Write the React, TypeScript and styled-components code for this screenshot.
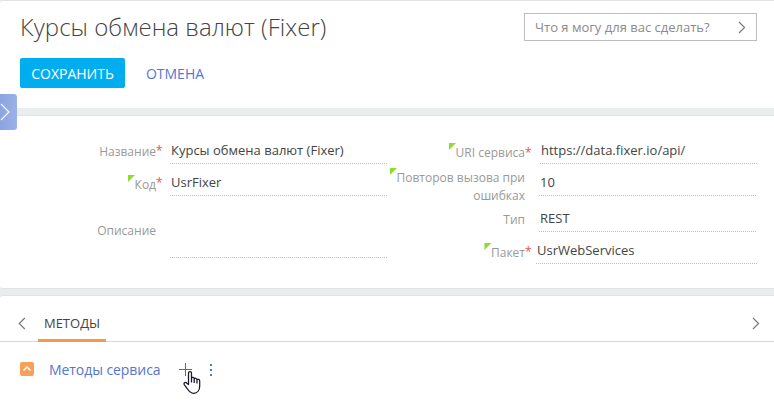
import React from "react";
import styled, { createGlobalStyle } from "styled-components";

const Global = createGlobalStyle`
  * { box-sizing: border-box; }
  html, body { margin: 0; padding: 0; background: #fff; }
  body { font-family: "Open Sans", "Noto Sans", sans-serif; font-size: 13px; color: #444; overflow: hidden; }
  svg { display: block; flex: none; }
`;

const Page = styled.div`
  position: relative;
  width: 774px;
  height: 405px;
  display: flex;
  flex-direction: column;
  background: #e9eded;
  overflow: hidden;
`;

const Header = styled.header`
  height: 108px;
  border-top: 1px solid #e2e4e4;
  border-top-left-radius: 3px;
  background: #fff;
  padding: 12px 17px 0 20px;
`;

const HeaderTop = styled.div`
  display: flex;
  justify-content: space-between;
  align-items: flex-start;
  height: 45px;
`;

const Title = styled.h1`
  margin: -3px 0 0;
  font-size: 24px;
  letter-spacing: 0.04px;
  line-height: 34px;
  font-weight: 300;
  color: #444;
  white-space: nowrap;
`;

const CommandBox = styled.div`
  width: 233px;
  height: 28px;
  border: 1px solid #bdbdbd;
  display: flex;
  align-items: center;
  justify-content: space-between;
  padding: 0 10px 0 10px;
  color: #8b8b8b;
  font-size: 13px;
  white-space: nowrap;
`;

const Actions = styled.div`
  display: flex;
  gap: 10px;
`;

const Button = styled.button<{ $primary?: boolean }>`
  height: 30px;
  width: ${(p) => (p.$primary ? 105 : 80)}px;
  padding: 1px 0 0;
  border: 0;
  border-radius: 2px;
  background: ${(p) => (p.$primary ? "#00aeef" : "transparent")};
  color: ${(p) => (p.$primary ? "#fff" : "#5576cf")};
  font: 14px "Open Sans", sans-serif;
  white-space: nowrap;
`;

const Fields = styled.section`
  height: 174px;
  margin-top: 7px;
  border: solid #e2e4e4;
  border-width: 1px 0;
  border-radius: 3px 0 0 3px;
  background: #fff;
  display: grid;
  grid-template-columns: 388px 369px;
  padding-top: 16px;
`;

const Column = styled.div`
  display: flex;
  flex-direction: column;
`;

const Row = styled.div<{ $height: number; $labelWidth: number }>`
  display: grid;
  grid-template-columns: ${(p) => p.$labelWidth}px 1fr;
  grid-template-rows: 100%;
  height: ${(p) => p.$height}px;
`;

const Label = styled.div<{ $top: number; $end: number }>`
  display: flex;
  justify-content: flex-end;
  align-items: flex-start;
  padding-top: ${(p) => p.$top}px;
  padding-right: ${(p) => p.$end}px;
  font-size: 12px;
  line-height: 18px;
  color: #999;
  text-align: right;
  white-space: pre;
`;

const LabelText = styled.span`
  position: relative;
`;

const Corner = styled.span`
  position: absolute;
  left: -6.6px;
  top: -1px;
  width: 7px;
  height: 7px;
  background: #8edc2c;
  clip-path: polygon(0 0, 100% 0, 0 100%);
`;

const Star = styled.span<{ $up: number }>`
  position: absolute;
  left: 100%;
  top: ${(p) => -p.$up}px;
  color: #f4523b;
`;

const Value = styled.div<{ $indent: number }>`
  display: flex;
  align-items: flex-end;
  height: 100%;
  padding: 0 0 5px ${(p) => p.$indent}px;
  line-height: 18px;
  background: repeating-linear-gradient(90deg, #bdbdbd 0 1px, transparent 1px 2px) bottom / 100% 1px no-repeat;
  white-space: nowrap;
`;

const Details = styled.section`
  flex: 1;
  margin-top: 6px;
  border-top: 1px solid #e2e4e4;
  border-top-left-radius: 3px;
  background: #fff;
`;

const TabBar = styled.div`
  display: flex;
  align-items: stretch;
  height: 46px;
  border-bottom: 1px solid #d8d8d8;
  padding: 0 14px 0 18px;
`;

const TabArrow = styled.div<{ $width: number }>`
  width: ${(p) => p.$width}px;
  display: flex;
  align-items: center;
  padding-top: 9px;
`;

const Tab = styled.div`
  width: 68px;
  height: 46px;
  margin-right: auto;
  border-bottom: 3px solid #f79747;
  padding-top: 18px;
  line-height: 18px;
  text-align: center;
  font-size: 13px;
`;

const DetailHeader = styled.div`
  display: flex;
  align-items: flex-start;
  padding: 18px 0 0 20px;
`;

const Collapse = styled.div`
  width: 14px;
  height: 14px;
  margin-top: 2px;
  border-radius: 2px;
  background: #f7a057;
`;

const DetailTitle = styled.div`
  width: 130px;
  margin-left: 15px;
  font-size: 14px;
  letter-spacing: -0.07px;
  line-height: 20px;
  color: #5576cf;
  white-space: nowrap;
`;

const AddButton = styled.div`
  position: relative;
  width: 13px;
  height: 13px;
  margin-top: 3px;
`;

const Cursor = styled.svg`
  position: absolute;
  left: 4px;
  top: 7px;
`;

const Dots = styled.svg`
  margin: 4px 0 0 18px;
`;

const SideHandle = styled.div`
  position: absolute;
  left: 0;
  top: 94px;
  width: 17px;
  height: 36px;
  border-radius: 0 3px 3px 0;
  background: linear-gradient(90deg, #8ba4e0, #9bb1e9);
`;

function Chevron({ left = false }: { left?: boolean }) {
  return (
    <svg width="8" height="13" viewBox="0 0 8 13" fill="none" stroke="#777" strokeWidth="1.15">
      <path d={left ? "M6.8 1 1.2 6.5l5.6 5.5" : "M1 1l5.6 5.5L1 12"} />
    </svg>
  );
}

interface FieldProps {
  label: string;
  value?: string;
  height: number;
  labelWidth: number;
  top: number;
  end?: number;
  indent?: number;
  corner?: boolean;
  starUp?: number;
}

function Field({ label, value, height, labelWidth, top, end = 14, indent = 1, corner, starUp }: FieldProps) {
  return (
    <Row $height={height} $labelWidth={labelWidth}>
      <Label $top={top} $end={end}>
        <LabelText>
          {corner && <Corner />}
          {label}
          {starUp !== undefined && <Star $up={starUp}>*</Star>}
        </LabelText>
      </Label>
      <Value $indent={indent}>{value}</Value>
    </Row>
  );
}

export default function App() {
  return (
    <Page>
      <Global />
      <Header>
        <HeaderTop>
          <Title>Курсы обмена валют (Fixer)</Title>
          <CommandBox>
            Что я могу для вас сделать?
            <Chevron />
          </CommandBox>
        </HeaderTop>
        <Actions>
          <Button $primary>СОХРАНИТЬ</Button>
          <Button>ОТМЕНА</Button>
        </Actions>
      </Header>

      <Fields>
        <Column>
          <Field label="Название" value="Курсы обмена валют (Fixer)" height={32} labelWidth={170} top={11} starUp={1} />
          <Field label="Код" value="UsrFixer" height={32} labelWidth={170} top={12} corner starUp={2} />
          <Field label="Описание" height={62} labelWidth={170} top={26} />
        </Column>
        <Column>
          <Field label="URI сервиса" value="https://data.fixer.io/api/" height={32} labelWidth={152} top={12} end={15} corner starUp={0} />
          <Field label={"Повторов вызова при\nошибках"} value="10" height={32} labelWidth={151} top={5} corner />
          <Field label="Тип" value="REST" height={36} labelWidth={151} top={15} />
          <Field label="Пакет" value="UsrWebServices" height={32} labelWidth={148} top={12} end={11} corner starUp={1} />
        </Column>
      </Fields>

      <Details>
        <TabBar>
          <TabArrow $width={20}>
            <Chevron left />
          </TabArrow>
          <Tab>МЕТОДЫ</Tab>
          <TabArrow $width={8}>
            <Chevron />
          </TabArrow>
        </TabBar>
        <DetailHeader>
          <Collapse>
            <svg width="14" height="14" fill="none" stroke="#fff" strokeWidth="1.5">
              <path d="M3.5 8.5 7 5l3.5 3.5" />
            </svg>
          </Collapse>
          <DetailTitle>Методы сервиса</DetailTitle>
          <AddButton>
            <svg width="13" height="13" stroke="#4669c9" strokeWidth="1">
              <path d="M6.5 0v13M0 6.5h13" />
            </svg>
            <Cursor width="20" height="25" viewBox="0 0 20 25" fill="#fff" stroke="#171725" strokeWidth="1.25" strokeLinejoin="round">
              <path d="M5.5 14.5V3c0-2 3-2 3 0v5c.5-1 2.7-.8 2.7.8.6-1 2.8-.6 2.8.9.7-.8 2.7-.3 2.7 1.2v5.2c0 4-2.3 7.2-6 7.2-3.6 0-5-2.3-6.5-4.8L1.2 14.5c-.9-1.8 1.5-2.8 2.6-1.3z" />
              <path d="M8.5 8v4.5M11.2 9v4M14 10v3.5" fill="none" />
            </Cursor>
          </AddButton>
          <Dots width="3" height="12" fill="#5576cf">
            <path d="M0 0h2v2H0zM0 5h2v2H0zM0 10h2v2H0z" />
          </Dots>
        </DetailHeader>
      </Details>
      <SideHandle>
        <svg width="17" height="36" fill="none" stroke="#fff" strokeWidth="1.1">
          <path d="M1 10l8 8-8 8" />
        </svg>
      </SideHandle>
    </Page>
  );
}
